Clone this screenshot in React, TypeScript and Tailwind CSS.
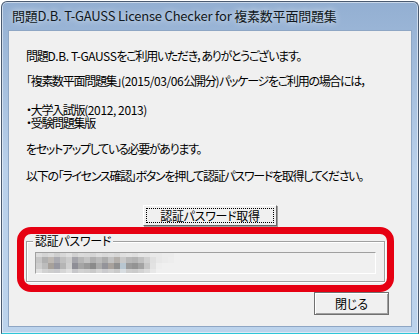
const mosaic = [
  ["#dcdcdc", "#d4d4d4", "#dadada", "#cfcfcf", "#d8d8d8", "#e0e0e0", "#d2d2d2", "#dbdbdb", "#d9d9d9", "#d6d6d6", "#dedede", "#d9d9d9", "#dcdcdc", "#d7d7d7", "#e0e0e0", "#e3e3e3", "#dfdfdf", "#e6e6e6", "#e5e5e5", "#e9e9e9", "#e9e9e9", "#ececec", "#ececec"],
  ["#c6c6c6", "#b0b0b0", "#bdb8b3", "#aaaab0", "#c0c0c0", "#cccccc", "#a4a4aa", "#b6b6b6", "#c3c3c3", "#afafaf", "#bbbbbb", "#acacac", "#c1c1c1", "#b3afab", "#c9c9c9", "#b8b8b8", "#b3b3b3", "#c0c0c0", "#d0d0d0", "#e0e0e0", "#e8e8e8", "#ebebeb", "#ededed"],
  ["#cdcdcd", "#bcbcbc", "#a7a19b", "#9797a0", "#b5b5b5", "#d0d0d0", "#8e8e96", "#a5a5a5", "#9a9a9a", "#8b8b8b", "#ababab", "#94949a", "#a8a29d", "#8f8f8f", "#b8c6d0", "#9a9a9a", "#939393", "#a3a3a3", "#c6c6c6", "#e2e2e2", "#eeeeee", "#f0f0f0", "#f0f0f0"],
  ["#e0e0e0", "#d2d2d2", "#cdcdcd", "#cacacd", "#d6d6d6", "#e0e0e0", "#c7c7ca", "#d2d2d2", "#cfcfcf", "#c9c9c9", "#d5d5d5", "#cbcbce", "#d2d2d2", "#cacaca", "#d8dde1", "#cecece", "#cbcbcb", "#d3d3d3", "#dcdcdc", "#e8e8e8", "#f0f0f0", "#f0f0f0", "#f0f0f0"],
];

function Mosaic() {
  return (
    <svg width="138" height="22" className="block">
      {mosaic.map((row, r) =>
        row.map((c, i) => (
          <rect key={`${r}-${i}`} x={i * 6} y={r * 6 - 2} width="6" height="6" fill={c} />
        ))
      )}
    </svg>
  );
}

const jp = "font-['Noto_Sans_CJK_JP',sans-serif] [font-feature-settings:'palt']";
// latin runs keep near-normal spacing, kana/kanji get squeezed like MS UI Gothic
const lat = "tracking-[-0.4px]";

export default function App() {
  return (
    <div className="w-[420px] h-[334px] bg-white">
      <div className="ml-[1px] mt-[1px] w-[418px] h-[333px] flex flex-col rounded-t-[6px] border border-[#4a5a70] border-b-[#2fc6d8] bg-gradient-to-b from-[#93afd2] via-[#b9d0ea] to-[#bcd3ec] shadow-[inset_0_0_0_1px_rgba(255,255,255,0.5)]">
        <div className="h-[28px] shrink-0 pl-[10px] flex items-center">
          <span className={`text-[13px] tracking-[-0.2px] text-[#101820] ${jp} [text-shadow:0_0_6px_rgba(255,255,255,0.9)]`}>
            問題D.B. T-GAUSS License Checker for 複素数平面問題集
          </span>
        </div>
        <div className="mx-[6px] mb-[6px] flex-1 bg-[#f0f0f0] border border-[#8ea6c4] relative">
          <div className={`pl-[17px] pt-[18px] text-[12px] leading-[13px] tracking-[-1.3px] text-black ${jp}`}>
            <p>問題<span className={lat}>D.B. T-GAUSS</span>をご利用いただき，ありがとうございます。</p>
            <p className="mt-[12px]">「複素数平面問題集」<span className={lat}>(2015/03/06</span>公開分<span className={lat}>)</span>パッケージをご利用の場合には，</p>
            <p className="mt-[16px]">・大学入試版<span className={lat}>(2012, 2013)</span></p>
            <p>・受験問題集版</p>
            <p className="mt-[13px]">をセットアップしている必要があります。</p>
            <p className="mt-[14px]">以下の「ライセンス確認」ボタンを押して認証パスワードを取得してください。</p>
          </div>

          <div className="mt-[23px] flex justify-center">
            <button className={`w-[134px] h-[21px] p-[2px] bg-[#f0f0f0] border border-t-white border-l-white border-r-[#696969] border-b-[#696969] shadow-[1px_1px_0_#a0a0a0] text-[12px] tracking-[-0.3px] text-black ${jp}`}>
              <span className="flex h-full w-full items-center justify-center border border-dotted border-black leading-none">
                認証パスワード取得
              </span>
            </button>
          </div>

          <div className="mt-[9px] ml-[17px] w-[359px] relative pt-[6px]">
            <div className="h-[41px] border border-[#a0a0a0] shadow-[inset_1px_1px_0_#fff,1px_1px_0_#fff] px-[8px] pt-[10px]">
              <div className="h-[22px] border-t border-l border-t-[#a0a0a0] border-l-[#a0a0a0] border-b border-r border-b-white border-r-white overflow-hidden">
                <Mosaic />
              </div>
            </div>
            <span className={`absolute left-[7px] top-0 px-[2px] bg-[#f0f0f0] text-[12px] leading-[12px] tracking-[-0.3px] text-black ${jp}`}>
              認証パスワード
            </span>
          </div>

          <div className="mt-[10px] flex justify-end pr-[22px]">
            <button className={`w-[75px] h-[23px] bg-[#f0f0f0] border border-[#707070] shadow-[inset_1px_1px_0_#fff,inset_-1px_-1px_0_#a0a0a0] text-[12px] text-black ${jp}`}>
              閉じる
            </button>
          </div>

          <div className="absolute left-[8px] top-[196px] w-[377px] h-[65px] border-[7px] border-[#e60012] rounded-[14px] pointer-events-none" />
        </div>
      </div>
    </div>
  );
}
